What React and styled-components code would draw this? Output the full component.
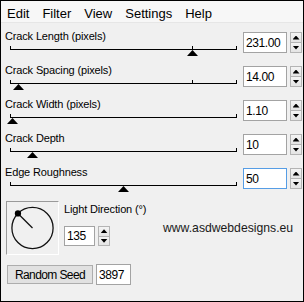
import React from "react";
import styled, { createGlobalStyle } from "styled-components";

const Global = createGlobalStyle`
  html, body { margin: 0; padding: 0; background: #f0f0f0; }
  #root { width: 304px; height: 302px; }
  * { box-sizing: border-box; }
`;

const Window = styled.div`
  width: 304px;
  height: 302px;
  border: 1px solid #000;
  background: #f0f0f0;
  font-family: "Liberation Sans", Arial, sans-serif;
  color: #000;
  display: flex;
  flex-direction: column;
  overflow: hidden;
`;

const MenuBar = styled.div`
  height: 22px;
  display: flex;
  align-items: flex-start;
  gap: 13px;
  padding: 5px 0 0 6px;
  background: #f7f7f7;
  border-bottom: 1px solid #e6e6e6;
  font-size: 13px;
  line-height: 15px;
`;

const MenuItem = styled.span`
  color: #000;
`;

const Content = styled.div`
  display: flex;
  flex-direction: column;
  padding: 7px 0 0 4px;
`;

const SliderRow = styled.div`
  display: grid;
  grid-template-columns: 235px 44px 12px;
  column-gap: 3px;
  height: 34px;
  align-items: start;
`;

const LeftCol = styled.div`
  display: flex;
  flex-direction: column;
`;

const Label = styled.div`
  font-size: 11px;
  line-height: 13px;
  letter-spacing: -0.15px;
  color: #000;
  white-space: nowrap;
`;

const Track = styled.div`
  position: relative;
  margin: 3px 0 0 5px;
  width: 227px;
  height: 4px;
  border-bottom: 1px solid #000;
`;

const Tick = styled.div`
  position: absolute;
  bottom: 0;
  width: 1px;
  height: ${(p) => p.$h}px;
  background: #000;
`;

const Thumb = styled.div`
  position: absolute;
  top: 4px;
  width: 11px;
  height: 6px;
  background: #000;
  clip-path: polygon(50% 0, 100% 100%, 0 100%);
`;

const TextBox = styled.input`
  display: block;
  width: ${(p) => p.$w}px;
  height: ${(p) => p.$h || 21}px;
  margin: ${(p) => p.$mt || 0}px 0 0 0;
  padding: 0 0 0 2px;
  border: 1px solid ${(p) => (p.$focus ? "#569de5" : "#a3a3a3")};
  background: #fff;
  font-family: "Liberation Sans", Arial, sans-serif;
  font-size: 12px;
  letter-spacing: -0.4px;
  color: #000;
  outline: none;
`;

const Spin = styled.div`
  display: flex;
  flex-direction: column;
  width: 12px;
  height: ${(p) => p.$h || 21}px;
  margin-top: ${(p) => p.$mt || 0}px;
`;

const SpinHalf = styled.div`
  flex: 1;
  display: flex;
  align-items: center;
  justify-content: center;
  border: 1px solid #b4b4b4;
  background: linear-gradient(#f4f4f4, #e4e4e4);
  & + & {
    border-top: none;
  }
`;

const Arrow = styled.div`
  width: 7px;
  height: 4px;
  background: #000;
  clip-path: ${(p) =>
    p.$down ? "polygon(0 0, 100% 0, 50% 100%)" : "polygon(50% 0, 100% 100%, 0 100%)"};
`;

const Bottom = styled.div`
  display: flex;
  margin-top: 1px;
  padding-left: 1px;
`;

const DialBox = styled.div`
  width: 53px;
  height: 54px;
  border-top: 1px solid #9a9a9a;
  border-left: 1px solid #9a9a9a;
  border-right: 1px solid #ffffff;
  border-bottom: 1px solid #ffffff;
  display: flex;
  align-items: center;
  justify-content: center;
`;

const DirCol = styled.div`
  display: flex;
  flex-direction: column;
  margin-left: 5px;
  padding-top: 2px;
`;

const DirRow = styled.div`
  display: flex;
  align-items: flex-start;
  gap: 3px;
  margin-top: 10px;
`;

const Website = styled.div`
  margin: -5px 0 0 50px;
  font-size: 12.2px;
  line-height: 15px;
  color: #1a1a1a;
  white-space: nowrap;
`;

const SeedRow = styled.div`
  display: flex;
  align-items: center;
  gap: 3px;
  margin: 9px 0 0 2px;
`;

const Button = styled.button`
  width: 86px;
  height: 19px;
  padding: 0;
  border: 1px solid #adadad;
  background: #e1e1e1;
  font-family: "Liberation Sans", Arial, sans-serif;
  font-size: 12px;
  letter-spacing: -0.6px;
  color: #000;
`;

const sliders = [
  { label: "Crack Length (pixels)", value: "231.00", offset: 182, mid: true },
  { label: "Crack Spacing (pixels)", value: "14.00", offset: 8, mid: true },
  { label: "Crack Width (pixels)", value: "1.10", offset: 2 },
  { label: "Crack Depth", value: "10", offset: 22 },
  { label: "Edge Roughness", value: "50", offset: 113, focus: true },
];

function SpinButtons({ h, mt }) {
  return (
    <Spin $h={h} $mt={mt}>
      <SpinHalf>
        <Arrow />
      </SpinHalf>
      <SpinHalf>
        <Arrow $down />
      </SpinHalf>
    </Spin>
  );
}

function Dial({ angle }) {
  const cx = 26;
  const cy = 26;
  const r = 21;
  const a = (angle * Math.PI) / 180;
  const dx = cx + r * Math.cos(a);
  const dy = cy - r * Math.sin(a);
  return (
    <svg width="52" height="52" viewBox="0 0 52 52">
      <circle cx={cx} cy={cy} r={r} fill="none" stroke="#111" strokeWidth="1.3" />
      <line x1={cx} y1={cy} x2={dx} y2={dy} stroke="#111" strokeWidth="1.3" />
      <circle cx={dx} cy={dy} r="3.2" fill="#000" />
    </svg>
  );
}

export default function App() {
  return (
    <>
      <Global />
      <Window>
        <MenuBar>
          {["Edit", "Filter", "View", "Settings", "Help"].map((m) => (
            <MenuItem key={m}>{m}</MenuItem>
          ))}
        </MenuBar>
        <Content>
          {sliders.map((s) => (
            <SliderRow key={s.label}>
              <LeftCol>
                <Label>{s.label}</Label>
                <Track>
                  <Tick $h={3} style={{ left: 0 }} />
                  <Tick $h={3} style={{ right: 0 }} />
                  {s.mid && <Tick $h={3} style={{ left: 182 }} />}
                  <Thumb style={{ left: s.offset - 5 }} />
                </Track>
              </LeftCol>
              <TextBox $w={44} $mt={2} $focus={s.focus} value={s.value} readOnly />
              <SpinButtons mt={2} />
            </SliderRow>
          ))}
          <Bottom>
            <DialBox>
              <Dial angle={135} />
            </DialBox>
            <DirCol>
              <Label>Light Direction (°)</Label>
              <DirRow>
                <TextBox $w={31} $h={20} value="135" readOnly />
                <SpinButtons h={20} />
                <Website>www.asdwebdesigns.eu</Website>
              </DirRow>
            </DirCol>
          </Bottom>
          <SeedRow>
            <Button>Random Seed</Button>
            <TextBox $w={35} value="3897" readOnly />
          </SeedRow>
        </Content>
      </Window>
    </>
  );
}
